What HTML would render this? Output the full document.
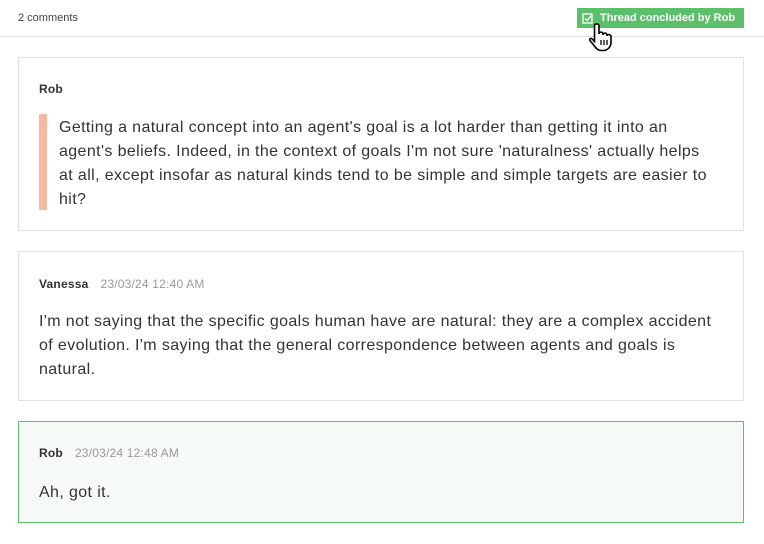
<!DOCTYPE html>
<html><head><style>
body{margin:0;width:764px;height:544px;background:#fff;font-family:"Liberation Sans",sans-serif;color:#333;position:relative;overflow:hidden}
.hdr{position:absolute;left:0;top:0;width:764px;height:36px;border-bottom:1px solid #e2e2e2}
.cnt{position:absolute;left:18px;top:12px;font-size:11px;color:#444}
.badge{position:absolute;left:577px;top:8px;width:167px;height:20px;background:#5cbf6a;color:#fff;font-size:11px;font-weight:bold;line-height:20px;box-sizing:border-box;padding-left:23px}
.box{position:absolute;left:18px;width:726px;box-sizing:border-box;border:1px solid #e2e2e2;background:#fff}
.name{position:absolute;left:20px;font-size:12px;font-weight:bold;color:#333;letter-spacing:0.2px}
.date{font-weight:normal;color:#999;margin-left:12px;font-size:12px}
.txt{position:absolute;font-size:16px;line-height:24px;color:#333;letter-spacing:0.38px;white-space:nowrap}
</style></head><body>
<div class="hdr"><div class="cnt">2 comments</div></div>
<div class="badge"><svg style="position:absolute;left:5px;top:5px" width="11" height="11" viewBox="0 0 11 11"><rect x="1" y="1" width="9" height="9" fill="none" stroke="#fff" stroke-width="1.3"/><path d="M3 5.5L5 7.5 10 2" fill="none" stroke="#fff" stroke-width="1.4"/></svg>Thread concluded by Rob</div>
<svg style="position:absolute;left:588px;top:22px" width="32" height="32" viewBox="0 0 32 32"><path d="M9 2c1.5 0 2 1 2 2v8c0-1 1-2 2-2s2 1 2 2v1c0-1 1-2 2-2s2 1 2 2v1c0-1 1-1.5 2-1.5s2 1 2 2v6c0 4-3 8-8 8h-2c-3 0-5-2-7-5l-4-5c-.8-1 0-2.5 1.5-2 1 .3 2 2 3 3V4c0-1 .5-2 2-2z" fill="#fff" stroke="#000" stroke-width="1.6"/><path d="M13 18v5M16 18v5M19 18v5" stroke="#000" stroke-width="1.3"/></svg>
<div class="box" style="top:57px;height:174px">
<div class="name" style="top:24px">Rob</div>
<div style="position:absolute;left:20px;top:56px;width:8px;height:96px;background:#f4b9a0"></div>
<div class="txt" style="left:40px;top:58px">Getting a natural concept into an agent's goal is a lot harder than getting it into an<br>agent's beliefs. Indeed, in the context of goals I'm not sure 'naturalness' actually helps<br>at all, except insofar as natural kinds tend to be simple and simple targets are easier to<br>hit?</div>
</div>
<div class="box" style="top:251px;height:150px">
<div class="name" style="top:25px">Vanessa<span class="date">23/03/24 12:40 AM</span></div>
<div class="txt" style="left:20px;top:58px">I'm not saying that the specific goals human have are natural: they are a complex accident<br>of evolution. I'm saying that the general correspondence between agents and goals is<br>natural.</div>
</div>
<div class="box" style="top:421px;height:102px;border-color:#5cbf6a;background:#f6faf6">
<div class="name" style="top:24px">Rob<span class="date">23/03/24 12:48 AM</span></div>
<div class="txt" style="left:20px;top:59px">Ah, got it.</div>
</div>
</body></html>
